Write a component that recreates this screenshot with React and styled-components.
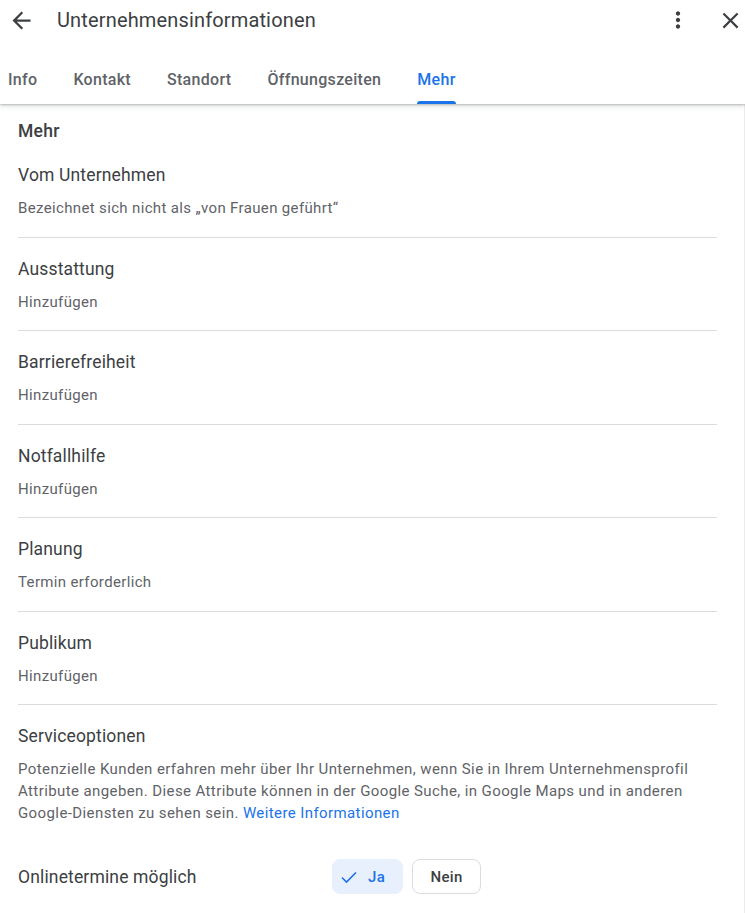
import styled, { createGlobalStyle } from 'styled-components'

const GlobalStyle = createGlobalStyle`
	html, body {
		margin: 0;
		padding: 0;
		background: #fff;
	}
	body {
		font-family: Roboto, 'Noto Sans', Arial, sans-serif;
		color: #3c4043;
		-webkit-font-smoothing: antialiased;
	}
	* {
		box-sizing: border-box;
	}
`

const Page = styled.div`
	width: 745px;
	height: 913px;
	display: flex;
	flex-direction: column;
	overflow: hidden;
	background: #fff;
`

const TopBar = styled.header`
	position: relative;
	z-index: 1;
	background: #fff;
	box-shadow: 0 1px 2px rgba(60, 64, 67, 0.3), 0 2px 6px rgba(60, 64, 67, 0.15);
`

const TitleRow = styled.div`
	height: 40px;
	display: flex;
	align-items: center;
	padding: 0 1.5px 0 8px;
`

const IconButton = styled.button`
	width: ${(p) => p.$size || 26}px;
	height: ${(p) => p.$size || 26}px;
	padding: 0;
	border: none;
	background: none;
	color: #3c4043;
	display: flex;
	align-items: center;
	justify-content: center;
	cursor: pointer;

	svg {
		width: 100%;
		height: 100%;
		fill: currentColor;
	}
`

const Title = styled.h1`
	flex: 1;
	margin: 0 0 0 22px;
	font-size: 20px;
	font-weight: 400;
	color: #3c4043;
	letter-spacing: 0.15px;
`

const Actions = styled.div`
	display: flex;
	align-items: center;
	gap: 26px;
`

const Tabs = styled.nav`
	height: 52px;
	margin-top: 12px;
	display: flex;
	gap: 36px;
	padding-left: 8px;
`

const Tab = styled.div`
	position: relative;
	display: flex;
	align-items: center;
	padding-top: 2px;
	font-size: 16px;
	font-weight: 500;
	letter-spacing: 0.3px;
	color: ${(p) => (p.$active ? '#1a73e8' : '#5f6368')};
	cursor: pointer;

	&::after {
		content: '';
		display: ${(p) => (p.$active ? 'block' : 'none')};
		position: absolute;
		left: 0;
		right: 0;
		bottom: 0;
		height: 3px;
		border-radius: 3px 3px 0 0;
		background: #1a73e8;
	}
`

const Content = styled.main`
	flex: 1;
	padding: 17px 27px 0 18px;
	border-right: 1px solid #ebebeb;
`

const SectionHeading = styled.h2`
	margin: 0 0 3px;
	font-size: 17.5px;
	line-height: 20px;
	font-weight: 500;
	letter-spacing: 0.3px;
	color: #3c4043;
`

const Item = styled.div`
	padding: 19px 0 18.5px;
	border-bottom: ${(p) => (p.$last ? 'none' : '1px solid #dadce0')};
`

const ItemTitle = styled.div`
	font-size: 17.5px;
	line-height: 24px;
	letter-spacing: 0.15px;
	color: #3c4043;
`

const ItemValue = styled.div`
	margin-top: 11px;
	font-size: 15px;
	line-height: 20px;
	letter-spacing: 0.35px;
	color: #5f6368;
`

const Description = styled.p`
	margin: 10px 0 0;
	font-size: 15px;
	line-height: 22px;
	letter-spacing: 0.4px;
	color: #5f6368;
`

const Link = styled.a`
	color: #1a73e8;
	text-decoration: none;
`

const OptionRow = styled.div`
	margin-top: 35px;
	display: flex;
	align-items: center;
`

const OptionLabel = styled.div`
	width: 314px;
	font-size: 17.5px;
	letter-spacing: 0.15px;
	color: #3c4043;
`

const Choices = styled.div`
	display: flex;
	gap: 9px;
`

const Choice = styled.button`
	height: 35px;
	display: flex;
	align-items: center;
	gap: 10px;
	padding: ${(p) => (p.$selected ? '0 17px 0 7px' : '0 17.5px')};
	border-radius: 8px;
	border: 1px solid ${(p) => (p.$selected ? '#e8f0fe' : '#dadce0')};
	background: ${(p) => (p.$selected ? '#e8f0fe' : '#fff')};
	color: ${(p) => (p.$selected ? '#1a73e8' : '#3c4043')};
	font-family: inherit;
	font-size: 15px;
	font-weight: 500;
	letter-spacing: 0.3px;
	cursor: pointer;

	svg {
		width: 18px;
		height: 18px;
	}
`

const items = [
	{ title: 'Vom Unternehmen', value: 'Bezeichnet sich nicht als „von Frauen geführt“' },
	{ title: 'Ausstattung', value: 'Hinzufügen' },
	{ title: 'Barrierefreiheit', value: 'Hinzufügen' },
	{ title: 'Notfallhilfe', value: 'Hinzufügen' },
	{ title: 'Planung', value: 'Termin erforderlich' },
	{ title: 'Publikum', value: 'Hinzufügen' },
]

const tabs = ['Info', 'Kontakt', 'Standort', 'Öffnungszeiten', 'Mehr']

export default function App() {
	return (
		<Page>
			<GlobalStyle />
			<TopBar>
				<TitleRow>
					<IconButton $size={27} aria-label='Zurück'>
						<svg viewBox='0 0 24 24'>
							<path d='M20 11H7.83l5.59-5.59L12 4l-8 8 8 8 1.41-1.41L7.83 13H20v-2z' />
						</svg>
					</IconButton>
					<Title>Unternehmensinformationen</Title>
					<Actions>
						<IconButton $size={26} aria-label='Mehr Optionen'>
							<svg viewBox='0 0 24 24'>
								<path d='M12 8c1.1 0 2-.9 2-2s-.9-2-2-2-2 .9-2 2 .9 2 2 2zm0 2c-1.1 0-2 .9-2 2s.9 2 2 2 2-.9 2-2-.9-2-2-2zm0 6c-1.1 0-2 .9-2 2s.9 2 2 2 2-.9 2-2-.9-2-2-2z' />
							</svg>
						</IconButton>
						<IconButton $size={27} aria-label='Schließen'>
							<svg viewBox='0 0 24 24'>
								<path d='M19 6.41L17.59 5 12 10.59 6.41 5 5 6.41 10.59 12 5 17.59 6.41 19 12 13.41 17.59 19 19 17.59 13.41 12z' />
							</svg>
						</IconButton>
					</Actions>
				</TitleRow>
				<Tabs>
					{tabs.map((t) => (
						<Tab key={t} $active={t === 'Mehr'}>
							{t}
						</Tab>
					))}
				</Tabs>
			</TopBar>
			<Content>
				<SectionHeading>Mehr</SectionHeading>
				{items.map((it) => (
					<Item key={it.title}>
						<ItemTitle>{it.title}</ItemTitle>
						<ItemValue>{it.value}</ItemValue>
					</Item>
				))}
				<Item $last>
					<ItemTitle>Serviceoptionen</ItemTitle>
					<Description>
						Potenzielle Kunden erfahren mehr über Ihr Unternehmen, wenn Sie in Ihrem Unternehmensprofil Attribute
						angeben. Diese Attribute können in der Google Suche, in Google Maps und in anderen Google-Diensten zu
						sehen sein. <Link href='#'>Weitere Informationen</Link>
					</Description>
					<OptionRow>
						<OptionLabel>Onlinetermine möglich</OptionLabel>
						<Choices>
							<Choice $selected>
								<svg viewBox='0 0 18 18' fill='none' stroke='currentColor' strokeWidth='1.6'>
									<polyline points='2,9.5 6.5,14 16,4.5' />
								</svg>
								Ja
							</Choice>
							<Choice>Nein</Choice>
						</Choices>
					</OptionRow>
				</Item>
			</Content>
		</Page>
	)
}
